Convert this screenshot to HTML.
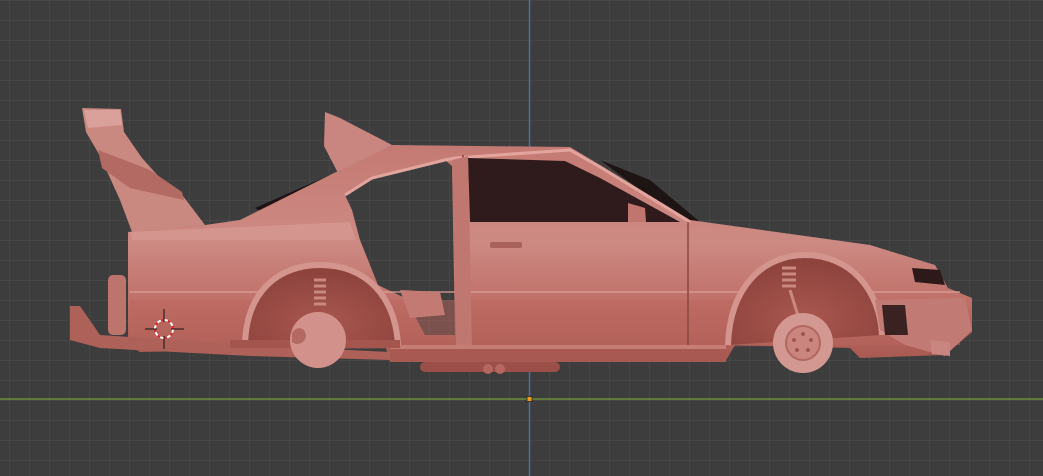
<!DOCTYPE html>
<html><head><style>
html,body{margin:0;padding:0;width:1043px;height:476px;overflow:hidden;background:#3d3d3d}
svg{display:block}
</style></head><body>
<svg width="1043" height="476" viewBox="0 0 1043 476" xmlns="http://www.w3.org/2000/svg">
<defs>
<pattern id="g" width="20" height="20" patternUnits="userSpaceOnUse" x="9.5" y="0">
<path d="M0 0H20M0 0V20" stroke="#4e4e4e" stroke-width="1" fill="none"/>
</pattern>
<linearGradient id="bd" x1="0" y1="0" x2="0" y2="1">
<stop offset="0" stop-color="#c47a73"/>
<stop offset="0.45" stop-color="#cd8a83"/>
<stop offset="0.75" stop-color="#bd6d65"/>
<stop offset="1" stop-color="#a65851"/>
</linearGradient>
<radialGradient id="arch" cx="0.5" cy="0.7" r="0.6">
<stop offset="0" stop-color="#a9574f"/>
<stop offset="1" stop-color="#8e443d"/>
</radialGradient>
</defs>
<rect width="1043" height="476" fill="#3d3d3d"/>
<rect width="1043" height="476" fill="url(#g)"/>
<line x1="529.5" y1="0" x2="529.5" y2="476" stroke="#4c6fa0" stroke-width="1.5"/>
<line x1="0" y1="399" x2="1043" y2="399" stroke="#6c8f3a" stroke-width="1.5"/>

<polygon points="82,108 121,109 124,132 142,158 160,178 183,196 205,225 132,232 120,200 100,156 86,132" fill="#c98880"/>
<polygon points="98,150 150,170 182,192 184,200 130,188 102,168" fill="#b36a62"/>
<polygon points="84,110 120,110 122,125 88,128" fill="#d9a19a"/>
<polygon points="325,112 340,118 392,145 338,173 324,146" fill="#c98580"/>
<polygon points="255,208 330,175 335,180 262,212" fill="#1e1414"/>
<polygon points="600,160 650,180 700,222 690,222 640,190" fill="#1e1414"/>

<path fill-rule="evenodd" fill="url(#bd)" d="
M128,232 L205,225 L240,220 L330,175 L392,145 L570,147 L600,165 L690,220 L870,245 L935,265 L948,288 L972,298 L972,332 L945,355 L860,358 L850,348 L735,345 L725,362 L390,362 L385,345 L250,350 L140,352 L128,345 Z
M345,195 L372,178 L445,160 L452,166 L455,335 L425,335 L405,298 L378,285 L360,240 L352,210 Z"/>
<polygon points="130,232 350,222 356,240 132,240" fill="#d4958e"/>
<polygon points="130,300 960,300 960,345 130,350" fill="#b9665e" opacity="0.5"/>
<line x1="130" y1="292" x2="960" y2="292" stroke="#e0a49d" stroke-width="2" opacity="0.6"/>
<polyline points="345,195 372,178 445,160 455,158 570,150 600,167 690,222" fill="none" stroke="#e2a59e" stroke-width="3"/>
<polygon points="468,158 565,161 600,178 680,222 470,222" fill="#2f1b1b"/>
<polygon points="628,203 645,208 646,222 628,222" fill="#c0766f"/>
<line x1="463" y1="155" x2="463" y2="345" stroke="#9a4e47" stroke-width="2"/>
<line x1="688" y1="222" x2="688" y2="345" stroke="#8a4640" stroke-width="1.5"/>
<rect x="490" y="242" width="32" height="6" rx="2" fill="#a9625b"/>
<polygon points="452,160 468,156 472,345 456,345" fill="#c07770"/>
<polygon points="400,290 440,292 445,315 410,318" fill="#c27a73"/>

<path d="M245,348 C245,290 280,265 320,265 C365,265 395,295 398,345 Z" fill="url(#arch)"/>
<path d="M245,348 C245,290 280,265 320,265 C365,265 395,295 398,345" fill="none" stroke="#d3958e" stroke-width="6"/>
<path d="M728,345 C730,285 765,255 805,255 C850,255 880,290 882,335 Z" fill="url(#arch)"/>
<path d="M728,345 C730,285 765,255 805,255 C850,255 880,290 882,335" fill="none" stroke="#d3958e" stroke-width="6"/>
<g stroke="#c98880" stroke-width="3">
<line x1="314" y1="280" x2="326" y2="280"/><line x1="314" y1="286" x2="326" y2="286"/><line x1="314" y1="292" x2="326" y2="292"/><line x1="314" y1="298" x2="326" y2="298"/><line x1="314" y1="304" x2="326" y2="304"/>
<line x1="782" y1="268" x2="796" y2="268"/><line x1="782" y1="274" x2="796" y2="274"/><line x1="782" y1="280" x2="796" y2="280"/><line x1="782" y1="286" x2="796" y2="286"/>
</g>
<line x1="790" y1="290" x2="800" y2="322" stroke="#c98880" stroke-width="3"/>

<rect x="390" y="345" width="336" height="17" fill="#a85a52"/>
<rect x="390" y="345" width="336" height="4" fill="#c57d76"/>
<rect x="420" y="362" width="140" height="10" rx="5" fill="#9c4f48"/>
<circle cx="488" cy="369" r="5" fill="#b4665f"/><circle cx="500" cy="369" r="5" fill="#b4665f"/>
<polygon points="70,306 80,306 100,335 250,345 390,352 390,360 250,356 100,348 70,340" fill="#ad6159"/>
<rect x="108" y="275" width="18" height="60" rx="5" fill="#bd746d"/>
<rect x="230" y="340" width="170" height="8" fill="#a3554e"/>

<circle cx="318" cy="340" r="28" fill="#d2928b"/>
<path d="M292,333 C296,326 305,326 306,336 C305,344 296,346 292,342 Z" fill="#b46a63"/>
<circle cx="803" cy="343" r="30" fill="#d39891"/>
<circle cx="803" cy="343" r="17" fill="#c9857e" stroke="#b06861" stroke-width="2"/>
<g fill="#9e564f"><circle cx="803" cy="334" r="2"/><circle cx="811" cy="340" r="2"/><circle cx="808" cy="350" r="2"/><circle cx="797" cy="350" r="2"/><circle cx="794" cy="340" r="2"/></g>

<polygon points="912,268 940,270 945,285 915,282" fill="#2d1919"/>
<polygon points="875,300 965,298 972,330 945,356 905,345 880,330" fill="#c27b74"/>
<polygon points="882,305 905,305 908,335 885,335" fill="#3a2222"/>
<polygon points="930,340 950,342 950,356 932,354" fill="#c98580"/>

<circle cx="164" cy="329" r="9" fill="none" stroke="#fff" stroke-width="2" stroke-dasharray="4 3"/>
<circle cx="164" cy="329" r="9" fill="none" stroke="#e0282a" stroke-width="2" stroke-dasharray="3 4" stroke-dashoffset="3"/>
<path d="M164,309V322M164,336V349M145,329H157M171,329H184" stroke="#111" stroke-width="1"/>
<rect x="527" y="396.5" width="5" height="5" fill="#f39a1e" stroke="#222" stroke-width="0.8"/>
</svg>
</body></html>
